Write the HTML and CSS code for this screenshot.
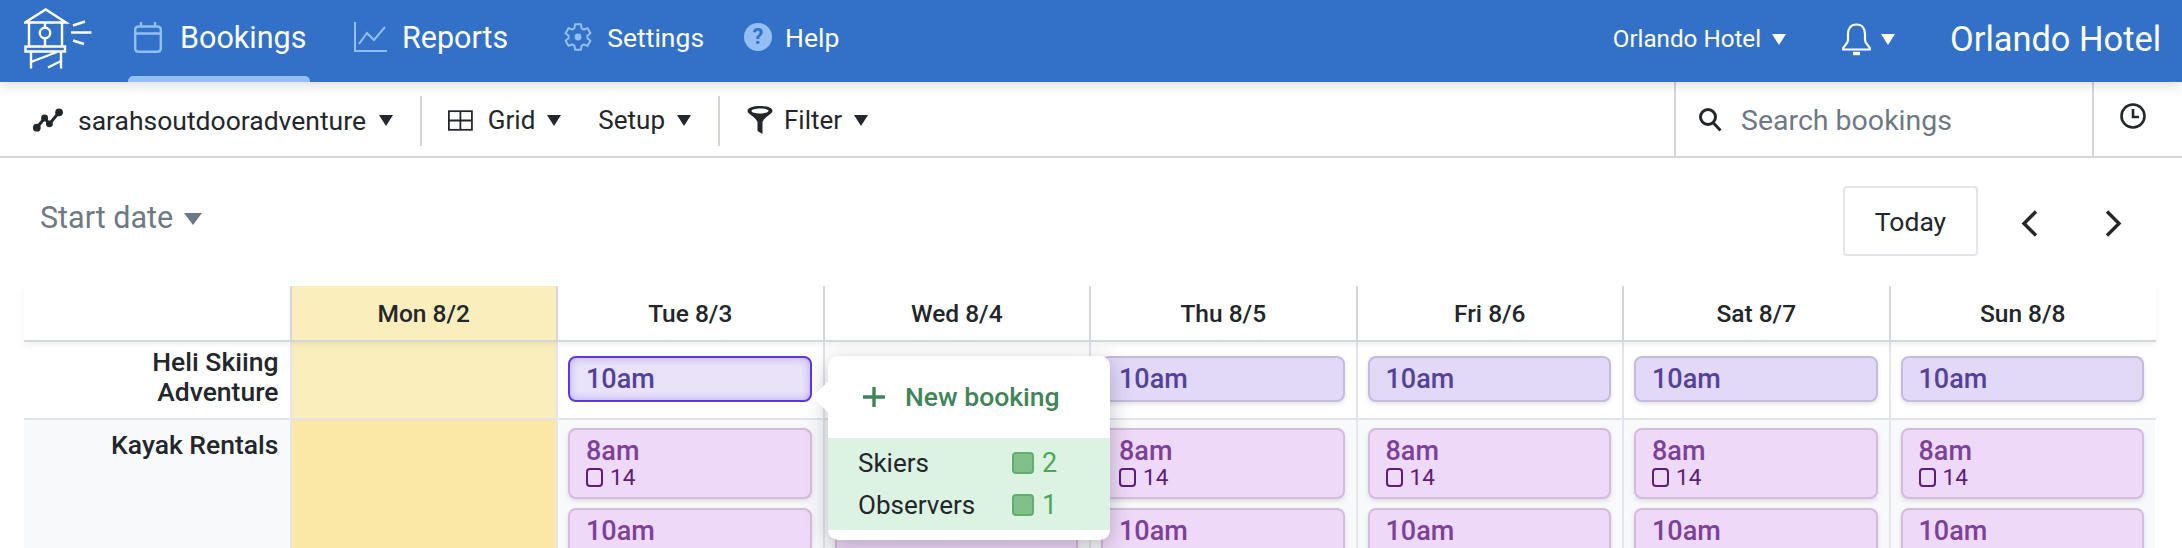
FILE: index.html
```html
<!DOCTYPE html>
<html lang="en">
<head>
    <meta charset="UTF-8">
    <title>Bookings</title>
    <link rel="stylesheet" href="styles.css">
</head>
<body>
    <header class="topbar">
        <svg class="logo" viewBox="24 8 68 62" fill="none" stroke="#fff" stroke-width="2.4">
            <path d="M25 22.5 45.7 9.5 66 22.5Z"/>
            <path d="M29 23V46M62 23V46M45 23V28M45 38V46"/>
            <circle cx="45" cy="33" r="5.2"/>
            <path d="M25.5 46.5H65V51.5H25.5Z"/>
            <path d="M31 52V68.5M61 52V68.5M31 62 57 52M48 67.5 61 61"/>
            <path d="M73 25.5 85 21.5M71 32.5H91.5M73 40.5 84 44"/>
        </svg>
        <nav class="nav">
            <a class="nav-item nav-big active">
                <svg class="nav-icon" width="28" height="31" viewBox="0 0 28 31" fill="none" stroke="#93bff5" stroke-width="2.4">
                    <rect x="1.2" y="4.5" width="25.6" height="25.3" rx="3"/>
                    <path d="M1.2 11.5H26.8M7 0V5M21 0V5"/>
                </svg>
                Bookings
            </a>
            <a class="nav-item nav-big reports">
                <svg class="nav-icon" width="33" height="30" viewBox="0 0 33 30" fill="none" stroke="#93bff5" stroke-width="2">
                    <path d="M1 0V29H33M5 22 13 11 20 18 31 5"/>
                </svg>
                Reports
            </a>
            <a class="nav-item nav-small settings">
                <svg class="nav-icon" width="28" height="28" viewBox="0 0 28 28" fill="none" stroke="#93bff5" stroke-width="2" stroke-linejoin="round">
                    <path d="M10.44 5.19 11.08 1.34H16.92L17.56 5.19 19.85 6.51 23.5 5.13 26.43 10.2 23.41 12.68V15.32L26.43 17.8 23.5 22.87 19.85 21.49 17.56 22.81 16.92 26.66H11.08L10.44 22.81 8.15 21.49 4.5 22.87 1.57 17.8 4.59 15.32V12.68L1.57 10.2 4.5 5.13 8.15 6.51Z"/>
                    <circle cx="14" cy="14" r="3.4" fill="#93bff5" stroke="none"/>
                </svg>
                Settings
            </a>
            <a class="nav-item nav-small help">
                <span class="help-icon">?</span>
                Help
            </a>
        </nav>
        <div class="top-right">
            <span class="hotel-menu">Orlando Hotel <i class="caret caret-white"></i></span>
            <span class="bell-menu">
                <svg width="29" height="33" viewBox="0 0 29 33" fill="none" stroke="#fff" stroke-width="2.2">
                    <path d="M14.5 1.5C8.5 1.5 6 6 6 11V17C6 20 3 22 1.2 25V26.5H27.8V25C26 22 23 20 23 17V11C23 6 20.5 1.5 14.5 1.5Z"/>
                    <path d="M11 30.5H18" stroke-width="3.4"/>
                </svg>
                <i class="caret caret-white"></i>
            </span>
            <span class="hotel-name">Orlando Hotel</span>
        </div>
    </header>

    <div class="toolbar">
        <div class="tool-group first">
            <svg class="tool-icon" width="32" height="26" viewBox="0 0 32 26" fill="none" stroke="#23262b" stroke-width="3">
                <path d="M5 21 13 11 18 17 28 5"/>
                <g fill="#23262b" stroke="none">
                    <circle cx="5" cy="21" r="4"/><circle cx="13" cy="11" r="3.6"/>
                    <circle cx="18" cy="17" r="3.6"/><circle cx="28" cy="5" r="4"/>
                </g>
            </svg>
            <span>sarahsoutdooradventure</span><i class="caret"></i>
        </div>
        <div class="tool-group second">
            <svg class="tool-icon" width="28" height="23" viewBox="0 0 28 23" fill="none" stroke="#23262b" stroke-width="2">
                <rect x="1" y="1" width="26" height="21"/>
                <path d="M14 1V22M1 11.500H27"/>
            </svg>
            <span>Grid</span><i class="caret"></i>
            <span class="setup">Setup</span><i class="caret"></i>
        </div>
        <div class="tool-group last">
            <svg class="tool-icon" width="26" height="28" viewBox="0 0 26 28" fill="#23262b">
                <path fill-rule="evenodd" d="M.5 5C.5 1.500 6 0 13 0S25.500 1.500 25.500 5C25.500 8 18 10 15.500 16V28L10.500 25V16C8 10 .5 8 .5 5ZM4.500 5C4.500 6.400 8.500 7.500 13 7.500S21.500 6.400 21.500 5 17.500 2.500 13 2.500 4.500 3.600 4.500 5Z"/>
            </svg>
            <span>Filter</span><i class="caret"></i>
        </div>
        <div class="search-box">
            <svg width="24" height="25" viewBox="0 0 24 25" fill="none" stroke="#23262b" stroke-width="3">
                <circle cx="10" cy="10" r="7.5"/>
                <path d="M15.5 16 22.5 23.5"/>
            </svg>
            <span class="search-text">Search bookings</span>
        </div>
        <div class="clock-box">
            <svg width="26" height="26" viewBox="0 0 26 26" fill="none" stroke="#23262b" stroke-width="2.6">
                <circle cx="13" cy="13" r="11.5"/>
                <path d="M13 6V14H19"/>
            </svg>
        </div>
    </div>

    <div class="date-row">
        <span class="start-date">Start date <i class="caret caret-grey"></i></span>
        <div class="date-nav">
            <button class="today">Today</button>
            <svg class="chevron" width="17" height="27" viewBox="0 0 17 27" fill="none" stroke="#23262b" stroke-width="3.4"><path d="M15 1.500 3 13.500 15 25.500"/></svg>
            <svg class="chevron next" width="17" height="27" viewBox="0 0 17 27" fill="none" stroke="#23262b" stroke-width="3.4"><path d="M2 1.500 14 13.500 2 25.500"/></svg>
        </div>
    </div>

    <div class="board">
        <div class="head-row">
            <div class="head-label"></div>
            <div class="head-day today-col">Mon 8/2</div>
            <div class="head-day">Tue 8/3</div>
            <div class="head-day">Wed 8/4</div>
            <div class="head-day">Thu 8/5</div>
            <div class="head-day">Fri 8/6</div>
            <div class="head-day">Sat 8/7</div>
            <div class="head-day">Sun 8/8</div>
        </div>

        <div class="row row-heli">
            <div class="row-label">Heli Skiing<br>Adventure</div>
            <div class="cell today-col"></div>
            <div class="cell"><div class="card heli selected">10am</div></div>
            <div class="cell"><div class="card heli">10am</div></div>
            <div class="cell"><div class="card heli">10am</div></div>
            <div class="cell"><div class="card heli">10am</div></div>
            <div class="cell"><div class="card heli">10am</div></div>
            <div class="cell"><div class="card heli">10am</div></div>
        </div>

        <div class="row row-kayak">
            <div class="row-label">Kayak Rentals</div>
            <div class="cell today-col"></div>
            <div class="cell">
                <div class="card kayak">8am<div class="seats"><i class="seat"></i>14</div></div>
                <div class="card kayak">10am</div>
            </div>
            <div class="cell">
                <div class="card kayak">8am<div class="seats"><i class="seat"></i>14</div></div>
                <div class="card kayak">10am</div>
            </div>
            <div class="cell">
                <div class="card kayak">8am<div class="seats"><i class="seat"></i>14</div></div>
                <div class="card kayak">10am</div>
            </div>
            <div class="cell">
                <div class="card kayak">8am<div class="seats"><i class="seat"></i>14</div></div>
                <div class="card kayak">10am</div>
            </div>
            <div class="cell">
                <div class="card kayak">8am<div class="seats"><i class="seat"></i>14</div></div>
                <div class="card kayak">10am</div>
            </div>
            <div class="cell">
                <div class="card kayak">8am<div class="seats"><i class="seat"></i>14</div></div>
                <div class="card kayak">10am</div>
            </div>
        </div>
    </div>

    <div class="popover">
        <div class="new-booking">
            <svg width="22" height="20" viewBox="0 0 22 20" fill="none" stroke="#3f8558" stroke-width="3.4"><path d="M11 0V20M0 10H22"/></svg>
            New booking
        </div>
        <div class="pop-list">
            <div class="pop-row"><span class="pop-name">Skiers</span><i class="pop-square"></i><span class="pop-count">2</span></div>
            <div class="pop-row"><span class="pop-name">Observers</span><i class="pop-square"></i><span class="pop-count">1</span></div>
        </div>
    </div>
</body>
</html>
```

FILE: styles.css
```css
* {
    box-sizing: border-box;
}
html, body {
    margin: 0;
    height: 548px;
    overflow: hidden;
}
body {
    position: relative;
    font-family: Roboto, "Liberation Sans", sans-serif;
    color: #23262b;
    background-color: #fff;
}
.caret {
    display: inline-block;
    width: 0;
    height: 0;
    border-left: 7px solid transparent;
    border-right: 7px solid transparent;
    border-top: 11px solid #23262b;
}
.caret-white {
    border-top-color: #fff;
}
.caret-grey {
    border-left-width: 9px;
    border-right-width: 9px;
    border-top: 12px solid #6f7986;
}

/* top bar */
.topbar {
    position: relative;
    z-index: 2;
    display: flex;
    align-items: center;
    height: 82px;
    padding-left: 24px;
    color: #fff;
    background-color: #3370c8;
    box-shadow: 0 4px 10px rgba(0, 0, 0, 0.12);
}
.logo {
    width: 68px;
    height: 62px;
    margin-top: -4px;
}
.nav {
    display: flex;
    height: 100%;
    margin-left: 36px;
}
.nav-item {
    position: relative;
    display: flex;
    align-items: center;
    height: 100%;
}
.nav-big {
    font-size: 30.5px;
    padding-bottom: 8px;
}
.nav-small {
    font-size: 26.5px;
    padding-bottom: 8px;
}
.nav-icon {
    flex: none;
}
.active {
    width: 182px;
    padding-left: 6px;
}
.active .nav-icon {
    margin-right: 18px;
}
.active::after {
    content: "";
    position: absolute;
    left: 0;
    right: 0;
    bottom: 0;
    height: 6px;
    border-radius: 5px 5px 0 0;
    background-color: #93bff5;
}
.reports {
    margin-left: 44px;
}
.reports .nav-icon {
    margin-right: 15px;
}
.settings {
    margin-left: 56px;
}
.settings .nav-icon {
    margin-right: 15px;
}
.help {
    margin-left: 40px;
}
.help-icon {
    width: 28px;
    height: 28px;
    margin-right: 13px;
    border-radius: 50%;
    color: #3370c8;
    background-color: #93bff5;
    font-size: 22px;
    font-weight: 700;
    line-height: 28px;
    text-align: center;
}
.top-right {
    display: flex;
    align-items: center;
    margin-left: auto;
    padding-right: 21px;
    padding-bottom: 4px;
}
.hotel-menu {
    font-size: 24.2px;
}
.hotel-menu .caret {
    margin-left: 5px;
    vertical-align: 2px;
}
.bell-menu {
    display: flex;
    align-items: center;
    margin-left: 56px;
}
.bell-menu .caret {
    margin-left: 10px;
}
.hotel-name {
    margin-left: 55px;
    font-size: 34.4px;
}

/* toolbar */
.toolbar {
    display: flex;
    align-items: stretch;
    height: 76px;
    border-bottom: 2px solid #d3d7dc;
    font-size: 26px;
}
.tool-group {
    display: flex;
    align-items: center;
    height: 50px;
    margin-top: 14px;
    padding: 0 27px 2px;
    border-right: 2px solid #d3d7dc;
}
.tool-group .caret {
    margin-left: 12px;
}
.tool-icon {
    margin-right: 15px;
}
.first {
    width: 422px;
    padding-left: 32px;
    font-size: 26.5px;
}
.first .caret {
    margin-left: 13px;
}
.second {
    width: 298px;
    padding-left: 26px;
}
.second .tool-icon {
    margin-right: 15px;
}
.setup {
    margin-left: 37px;
}
.last {
    width: 300px;
    border-right: none;
}
.last .tool-icon {
    margin-right: 11px;
}
.search-box {
    display: flex;
    align-items: center;
    width: 420px;
    margin-left: auto;
    padding-left: 22px;
    border-left: 2px solid #d3d7dc;
    border-right: 2px solid #d3d7dc;
}
.search-text {
    margin-left: 19px;
    padding-top: 2px;
    font-size: 28.5px;
    color: #6f7986;
}
.clock-box {
    display: flex;
    align-items: center;
    width: 88px;
    padding: 0 0 6px 26px;
}

/* start date and paging */
.date-row {
    display: flex;
    justify-content: space-between;
    height: 128px;
    padding: 28px 60px 0 40px;
}
.start-date {
    margin-top: 17px;
    font-size: 30.5px;
    line-height: 30px;
    color: #6f7986;
}
.start-date .caret {
    margin-left: 3px;
    vertical-align: 3px;
}
.date-nav {
    display: flex;
    align-items: center;
    height: 70px;
}
.today {
    width: 135px;
    height: 70px;
    padding: 0;
    border: 2px solid #e3e5ea;
    border-radius: 4px;
    color: #23262b;
    background-color: #fff;
    font: 26.5px Roboto, sans-serif;
}
.chevron {
    margin-top: 4px;
    margin-left: 43px;
}
.chevron.next {
    margin-left: 67px;
}

/* board */
.board {
    margin-left: 24px;
    width: 2132px;
}
.head-row, .row {
    display: grid;
    grid-template-columns: 265.5px repeat(7, 266.5px);
}
.head-row {
    position: relative;
    z-index: 1;
    height: 56px;
    border-bottom: 2px solid #d3d7dc;
    box-shadow: 0 3px 6px rgba(40, 50, 70, 0.07);
}
.head-day {
    display: flex;
    justify-content: center;
    align-items: center;
    border-left: 2px solid #d3d7dc;
    background-color: #fff;
    font-size: 24.5px;
    font-weight: 500;
}
.head-day.today-col {
    background-color: #fbeebd;
}
.today-col {
    background-color: #fbeebd;
}
.row-label {
    padding: 5px 11px 0 0;
    font-size: 26.5px;
    font-weight: 500;
    line-height: 30px;
    text-align: right;
}
.cell {
    padding: 14px 11px 0 10px;
    border-left: 2px solid #e3e5ea;
}
.row-heli {
    height: 78px;
    border-bottom: 2px solid #e3e5ea;
}
.row-kayak {
    height: 130px;
}
.row-kayak .row-label {
    padding-top: 10px;
    background-color: #f8f9fb;
}
.row-kayak .cell {
    padding-top: 8px;
    background-color: #f8f9fb;
}
.row-kayak .today-col {
    background-color: #fce8a6;
}
.card {
    padding-left: 16px;
    border: 2px solid;
    border-radius: 8px;
    font-size: 27px;
    font-weight: 500;
    box-shadow: 0 2px 4px rgba(60, 40, 100, 0.14);
}
.heli {
    height: 46px;
    line-height: 42px;
    color: #54429a;
    background-color: #e2d9f7;
    border-color: #c5bbdd;
}
.selected {
    color: #54429a;
    background-color: #e9e3fa;
    border-color: #5f36e0;
    box-shadow: inset 0 0 8px rgba(95, 54, 224, 0.35);
}
.kayak {
    height: 71px;
    margin-bottom: 9px;
    padding-top: 6px;
    line-height: 30px;
    color: #7c4199;
    background-color: #efd9f8;
    border-color: #d3bcdc;
}
.seats {
    display: flex;
    align-items: center;
    font-size: 22.5px;
    font-weight: 400;
    line-height: 22px;
    color: #5c1d7b;
}
.seat {
    width: 17px;
    height: 19px;
    margin-right: 7px;
    border: 2px solid #5c1d7b;
    border-radius: 4px;
}

/* new booking popover */
.popover {
    position: absolute;
    z-index: 3;
    left: 828px;
    top: 356px;
    width: 282px;
    height: 184px;
    padding-top: 82px;
    border-radius: 10px;
    background-color: #fff;
    box-shadow: 0 6px 22px rgba(30, 30, 50, 0.28);
}
.popover::before {
    content: "";
    position: absolute;
    left: -11px;
    top: 30px;
    width: 22px;
    height: 22px;
    transform: rotate(45deg);
    background-color: #fff;
}
.new-booking {
    position: absolute;
    left: 35px;
    top: 21px;
    display: flex;
    align-items: center;
    gap: 20px;
    font-size: 26.5px;
    font-weight: 500;
    line-height: 40px;
    color: #3f8558;
}
.pop-list {
    height: 92px;
    padding-top: 4px;
    background-color: #dcf2e2;
}
.pop-row {
    display: flex;
    align-items: center;
    height: 42px;
    padding-left: 30px;
}
.pop-name {
    width: 154px;
    font-size: 26px;
}
.pop-square {
    width: 22px;
    height: 22px;
    margin-right: 8px;
    border: 2px solid #63ae6e;
    border-radius: 4px;
    background-color: #82c08b;
}
.pop-count {
    font-size: 27px;
    color: #4ea65b;
}
```
